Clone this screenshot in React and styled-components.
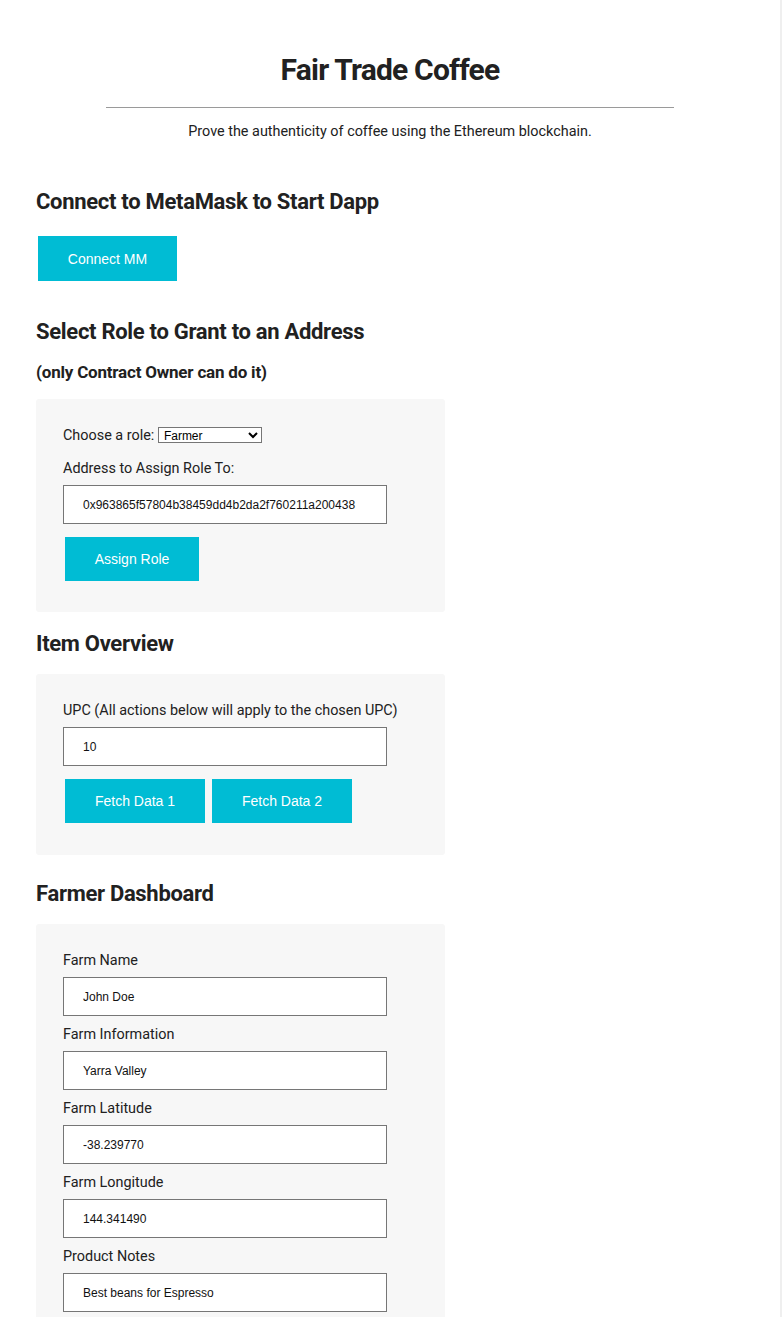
import React from "react";
import styled, { createGlobalStyle } from "styled-components";

const GlobalStyle = createGlobalStyle`
  html, body {
    margin: 0;
    padding: 0;
    background: #ffffff;
  }
  body {
    font-family: Roboto, "Noto Sans", sans-serif;
    color: #212121;
  }
`;

const Page = styled.div`
  width: 782px;
  min-height: 100vh;
  border-right: 2px solid #efefef;
  padding: 0 36px;
  box-sizing: border-box;
`;

const Header = styled.header`
  text-align: center;
  padding-top: 52px;
`;

const Title = styled.h1`
  margin: 0;
  font-size: 30px;
  line-height: 36px;
  font-weight: 700;
  letter-spacing: -0.8px;
`;

const Rule = styled.hr`
  width: 568px;
  margin: 19px auto 15px;
  border: 0;
  border-top: 1px solid #9a9a9a;
`;

const Subtitle = styled.p`
  margin: 0;
  font-size: 14.4px;
  line-height: 18px;
`;

const Heading = styled.h2`
  margin: ${(p) => p.$top}px 0 ${(p) => p.$bottom}px;
  font-size: 22px;
  line-height: 26px;
  font-weight: 700;
  letter-spacing: -0.3px;
`;

const SubHeading = styled.h3`
  margin: 0 0 16px;
  font-size: 17px;
  line-height: 22px;
  font-weight: 700;
  letter-spacing: -0.2px;
`;

const Panel = styled.section`
  width: 409px;
  box-sizing: border-box;
  background: #f7f7f7;
  border-radius: 3px;
  padding: 18px 27px ${(p) => p.$bottom}px;
`;

const Label = styled.label`
  display: block;
  margin: 9px 0 6px;
  font-size: 14.4px;
  line-height: 20px;
`;

const RoleRow = styled(Label)`
  margin-bottom: 13px;
`;

const RoleSelect = styled.select`
  width: 104px;
  height: 16px;
  margin: 0;
  padding: 0 0 0 1px;
  font-family: "Liberation Sans", Arial, sans-serif;
  font-size: 12px;
  color: #000;
  background: #fff;
  border: 1px solid #767676;
  border-radius: 0;
`;

const TextInput = styled.input`
  display: block;
  width: 324px;
  height: 39px;
  box-sizing: border-box;
  margin: 0;
  padding: 0 19px;
  font-family: "Liberation Sans", Arial, sans-serif;
  font-size: 12px;
  color: #111;
  background: #fff;
  border: 1px solid #767676;
  border-radius: 0;
`;

const ButtonRow = styled.div`
  display: flex;
  gap: 3px;
  margin-top: ${(p) => p.$top}px;
`;

const Button = styled.button`
  margin: 2px;
  height: ${(p) => p.$height || 44}px;
  min-width: ${(p) => p.$width}px;
  padding: 0 28px;
  border: 0;
  border-radius: 0;
  background: #00bcd4;
  color: #fff;
  font-family: "Liberation Sans", Arial, sans-serif;
  font-size: 14px;
  cursor: pointer;
`;

const Field = ({ label, value }) => (
  <>
    <Label>{label}</Label>
    <TextInput defaultValue={value} />
  </>
);

const farmFields = [
  ["Farm Name", "John Doe"],
  ["Farm Information", "Yarra Valley"],
  ["Farm Latitude", "-38.239770"],
  ["Farm Longitude", "144.341490"],
  ["Product Notes", "Best beans for Espresso"],
];

export default function App() {
  return (
    <Page>
      <GlobalStyle />
      <Header>
        <Title>Fair Trade Coffee</Title>
        <Rule />
        <Subtitle>Prove the authenticity of coffee using the Ethereum blockchain.</Subtitle>
      </Header>

      <Heading $top={48} $bottom={19}>Connect to MetaMask to Start Dapp</Heading>
      <ButtonRow $top={0}>
        <Button $width={139} $height={45}>Connect MM</Button>
      </ButtonRow>

      <Heading $top={36} $bottom={16}>Select Role to Grant to an Address</Heading>
      <SubHeading>(only Contract Owner can do it)</SubHeading>
      <Panel $bottom={29}>
        <RoleRow>
          Choose a role:{" "}
          <RoleSelect defaultValue="Farmer">
            <option>Farmer</option>
            <option>Distributor</option>
            <option>Retailer</option>
            <option>Consumer</option>
          </RoleSelect>
        </RoleRow>
        <Label>Address to Assign Role To:</Label>
        <TextInput defaultValue="0x963865f57804b38459dd4b2da2f760211a200438" />
        <ButtonRow $top={11}>
          <Button $width={134}>Assign Role</Button>
        </ButtonRow>
      </Panel>

      <Heading $top={19} $bottom={17}>Item Overview</Heading>
      <Panel $bottom={30}>
        <Label>UPC (All actions below will apply to the chosen UPC)</Label>
        <TextInput defaultValue="10" />
        <ButtonRow $top={11}>
          <Button $width={140}>Fetch Data 1</Button>
          <Button $width={140}>Fetch Data 2</Button>
        </ButtonRow>
      </Panel>

      <Heading $top={26} $bottom={17}>Farmer Dashboard</Heading>
      <Panel $bottom={30}>
        {farmFields.map(([label, value]) => (
          <Field key={label} label={label} value={value} />
        ))}
      </Panel>
    </Page>
  );
}
